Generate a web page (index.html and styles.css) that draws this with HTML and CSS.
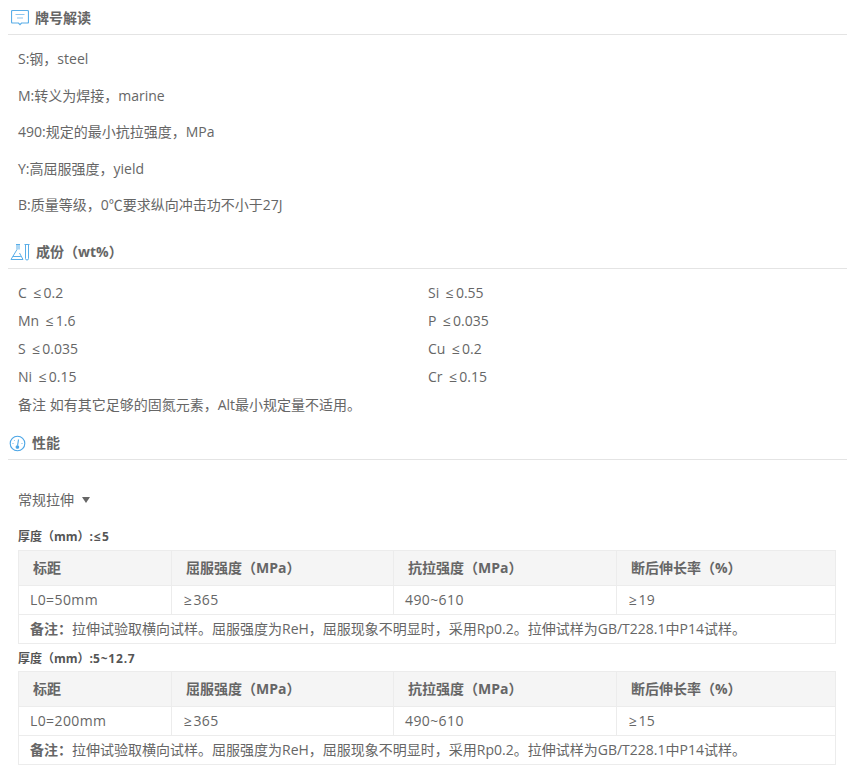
FILE: index.html
```html
<!DOCTYPE html>
<html lang="zh-CN">
<head>
<meta charset="utf-8">
<title>牌号解读</title>
<link rel="stylesheet" href="styles.css">
</head>
<body>
<section class="sec sec-a">
  <h2 class="sec-title">
    <svg class="ic" width="18" height="18" viewBox="0 0 18 18" fill="none" stroke="#5aaee8" stroke-width="1.200"><path d="M1.500 1.500h15a1 1 0 0 1 1 1v10.500a1 1 0 0 1-1 1h-6L9 15.600 7.500 14h-6a1 1 0 0 1-1-1V2.500a1 1 0 0 1 1-1z"/><path d="M4.500 5.500h9M6 9h6" stroke="#8cc6f0"/></svg>
    <span>牌号解读</span>
  </h2>
  <div class="notes">
    <p>S:钢，steel</p>
    <p>M:转义为焊接，marine</p>
    <p>490:规定的最小抗拉强度，MPa</p>
    <p>Y:高屈服强度，yield</p>
    <p>B:质量等级，0℃要求纵向冲击功不小于27J</p>
  </div>
</section>
<section class="sec sec-b">
  <h2 class="sec-title">
    <svg class="ic" width="20" height="18" viewBox="0 0 20 18" fill="none" stroke="#5aaee8" stroke-width="1"><path d="M6 1.500h4M7 1.500v5L1 16.500h12L9.500 10M9 1.500v5"/><path d="M2.800 13.500h8"/><path d="M14.500 1.500h5M15.500 1.500v14a1.500 1.500 0 0 0 3 0v-14"/></svg>
    <span>成份（wt%）</span>
  </h2>
  <div class="comp">
    <div>C <span class="sym">≤</span>0.2</div><div>Si <span class="sym">≤</span>0.55</div>
    <div>Mn <span class="sym">≤</span>1.6</div><div>P <span class="sym">≤</span>0.035</div>
    <div>S <span class="sym">≤</span>0.035</div><div>Cu <span class="sym">≤</span>0.2</div>
    <div>Ni <span class="sym">≤</span>0.15</div><div>Cr <span class="sym">≤</span>0.15</div>
  </div>
  <p class="remark">备注 如有其它足够的固氮元素，Alt最小规定量不适用。</p>
</section>
<section class="sec sec-c">
  <h2 class="sec-title">
    <svg class="ic" width="17" height="17" viewBox="0 0 17 17" fill="none" stroke="#4aa5e6" stroke-width="1.100"><circle cx="8.500" cy="8.500" r="7.300"/><path d="M9.500 4.500 8.600 10.500"/><circle cx="8.400" cy="12" r="1.300" fill="#4aa5e6"/><path d="M3.500 8.500h1M12.500 8.500h1M5 5l.7.7" stroke-width=".8"/></svg>
    <span>性能</span>
  </h2>
  <div class="drop">常规拉伸<i class="caret"></i></div>
  <h3 class="tbl-title">厚度（mm）:<span class="sym-t">≤</span>5</h3>
  <table>
    <colgroup><col class="c1"><col class="c2"><col class="c3"><col class="c4"></colgroup>
    <tr class="head"><th>标距</th><th>屈服强度（MPa）</th><th>抗拉强度（MPa）</th><th>断后伸长率（%）</th></tr>
    <tr class="row"><td>L0=50mm</td><td><span class="sym-t">≥</span>365</td><td>490~610</td><td><span class="sym-t">≥</span>19</td></tr>
    <tr class="note"><td colspan="4"><b>备注：</b>拉伸试验取横向试样。屈服强度为ReH，屈服现象不明显时，采用Rp0.2。拉伸试样为GB/T228.1中P14试样。</td></tr>
  </table>
  <h3 class="tbl-title second">厚度（mm）:<span class="range">5~12.7</span></h3>
  <table>
    <colgroup><col class="c1"><col class="c2"><col class="c3"><col class="c4"></colgroup>
    <tr class="head"><th>标距</th><th>屈服强度（MPa）</th><th>抗拉强度（MPa）</th><th>断后伸长率（%）</th></tr>
    <tr class="row"><td>L0=200mm</td><td><span class="sym-t">≥</span>365</td><td>490~610</td><td><span class="sym-t">≥</span>15</td></tr>
    <tr class="note"><td colspan="4"><b>备注：</b>拉伸试验取横向试样。屈服强度为ReH，屈服现象不明显时，采用Rp0.2。拉伸试样为GB/T228.1中P14试样。</td></tr>
  </table>
</section>
</body>
</html>
```
FILE: styles.css
```css
* { box-sizing: border-box; }
html, body { margin: 0; padding: 0; background: #fff; }
body {
  padding: 0 6px 0 8px;
  font-family: "Open Sans", "Noto Sans CJK SC", sans-serif;
  font-size: 14px;
  color: #666;
  overflow: hidden;
  height: 771px;
}
p, h2, h3 { margin: 0; }
.sym { margin: 0 2px 0 3px; }
.sym-t { margin: 0 1px 0 1px; }
.range { letter-spacing: .8px; }
.sec-title {
  display: flex;
  align-items: center;
  gap: 6px;
  height: 35px;
  padding: 2px 0 0 2px;
  border-bottom: 1px solid #e4e4e4;
  font-size: 14px;
  font-weight: 700;
  color: #666;
  line-height: 20px;
}
.sec-a .sec-title { padding-left: 3px; }
.sec-c .sec-title { padding-left: 1px; }
.ic { flex: none; display: block; }
.notes { padding: 6px 0 0 10px; }
.notes p { height: 36.500px; line-height: 36.500px; }
.sec-b { padding-top: 10.500px; }
.comp {
  display: grid;
  grid-template-columns: 410px 1fr;
  grid-auto-rows: 28px;
  padding: 10px 0 0 10px;
  line-height: 28px;
}
.remark { padding-left: 10px; line-height: 28px; }
.sec-c { padding-top: 6px; }
.drop { margin: 26px 0 0 10px; display: flex; align-items: center; height: 26px; }
.caret {
  width: 0; height: 0; margin: 2px 0 0 8px;
  border-left: 4px solid transparent;
  border-right: 4px solid transparent;
  border-top: 6px solid #666;
}
.tbl-title {
  margin: 15px 0 3px 10px;
  height: 20px;
  line-height: 20px;
  font-size: 12px;
  font-weight: 700;
  color: #555;
}
.tbl-title.second { margin: 5px 0 2px 10px; }
table {
  width: 817px;
  margin-left: 10px;
  border-collapse: collapse;
  table-layout: fixed;
  border: 1px solid #ececec;
}
.c1 { width: 153px; }
.c2 { width: 222px; }
.c3 { width: 223px; }
.c4 { width: 219px; }
th, td { border: 1px solid #ececec; padding: 0 0 2px; text-align: left; }
.head th {
  height: 35px;
  background: #f5f5f5;
  padding-left: 14px;
  font-size: 14px;
  font-weight: 700;
  color: #666;
}
.row td { height: 29px; padding-left: 11px; letter-spacing: .4px; }
.note td { height: 29px; padding-left: 11px; color: #666; white-space: nowrap; }
.note b { font-weight: 700; }
```
